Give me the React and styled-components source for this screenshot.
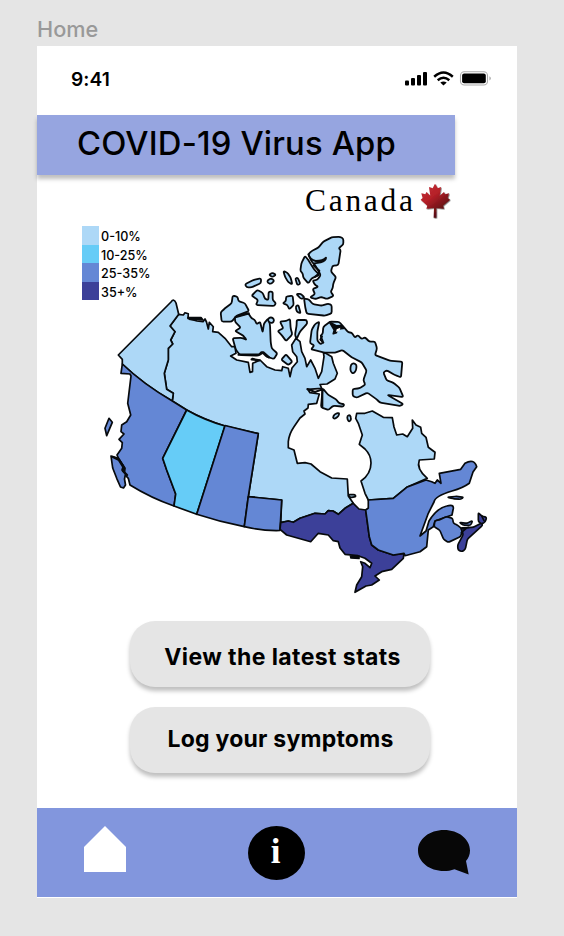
import React from "react";
import styled, { createGlobalStyle } from "styled-components";

const GlobalStyle = createGlobalStyle`
  * { box-sizing: border-box; }
  body { margin: 0; background: #e5e5e5; font-family: Inter, sans-serif; color: #000; }
  svg { display: block; }
`;

const Canvas = styled.div`
  width: 564px;
  height: 936px;
  padding: 16px 47px 0 37px;
  overflow: hidden;
`;
const FrameLabel = styled.div`
  height: 30px;
  line-height: 27px;
  font-size: 21.7px;
  font-weight: 500;
  color: #999;
`;
const Phone = styled.main`
  width: 480px;
  height: 852px;
  display: flex;
  flex-direction: column;
  background: #fff;
`;
const StatusBar = styled.div`
  height: 69px;
  padding: 0 25px 4px 34px;
  display: flex;
  align-items: center;
  justify-content: space-between;
`;
const Time = styled.span`
  font-size: 19.2px;
  font-weight: 600;
  letter-spacing: 0.1px;
`;
const TitleBar = styled.header`
  width: 418px;
  height: 60px;
  padding: 0 0 4px 40px;
  display: flex;
  align-items: center;
  background: #96a5e0;
  box-shadow: 0 4px 4px rgba(0, 0, 0, 0.25);
`;
const Title = styled.h1`
  margin: 0;
  font-size: 32.8px;
  font-weight: 500;
  letter-spacing: 0.15px;
  white-space: nowrap;
`;
const Brand = styled.div`
  height: 50px;
  padding: 8px 65px 0 268px;
  display: flex;
  align-items: flex-start;
  justify-content: space-between;
`;
const BrandName = styled.span`
  font-family: "Liberation Serif", serif;
  font-size: 31.5px;
  line-height: 36px;
  letter-spacing: 2.7px;
  white-space: nowrap;
`;
const MapSection = styled.section`
  display: grid;
  height: 396px;
`;
const Legend = styled.ul`
  grid-area: 1 / 1;
  z-index: 1;
  align-self: start;
  justify-self: start;
  margin: 1px 0 0 45px;
  padding: 0;
  list-style: none;
`;
const LegendRow = styled.li`
  height: 18.5px;
  display: flex;
  align-items: center;
  gap: 2px;
  font-size: 12.6px;
  font-weight: 500;
  line-height: 18px;
  white-space: nowrap;
`;
const Swatch = styled.span`
  width: 17px;
  height: 18.5px;
  background: ${(p) => p.$color};
`;
const LegendText = styled.span`
  padding-top: 4px;
`;
const MapDrawing = styled.svg`
  grid-area: 1 / 1;
  margin-left: 63px;
`;
const Actions = styled.div`
  display: flex;
  flex-direction: column;
  align-items: center;
  gap: 20px;
  padding-left: 6px;
`;
const ActionButton = styled.button`
  width: 300px;
  height: 66px;
  padding: ${(p) => p.$drop}px 0 ${(p) => p.$lift}px ${(p) => p.$shift}px;
  border: 0;
  border-radius: 25px;
  background: #e5e5e5;
  box-shadow: 0 4px 4px rgba(0, 0, 0, 0.25);
  color: #000;
  font: 700 23px Inter, sans-serif;
  letter-spacing: ${(p) => p.$tracking}px;
  white-space: nowrap;
`;
const TabBar = styled.nav`
  height: 89px;
  margin-top: auto;
  margin-bottom: 1px;
  padding: 0 47px;
  display: flex;
  align-items: center;
  justify-content: space-between;
  background: #8296dd;
`;
const HomeIcon = styled.svg`
  margin-bottom: 8px;
`;
const InfoBadge = styled.span`
  width: 57px;
  height: 54px;
  margin: 0 0 0 9px;
  padding: 0 2px 1px 0;
  border-radius: 50%;
  display: flex;
  align-items: center;
  justify-content: center;
  background: #000;
  color: #fff;
  font: 700 35px "Liberation Serif", serif;
`;

const LIGHT = "#add8f7";
const CYAN = "#66ccf7";
const BLUE = "#6487d5";
const NAVY = "#3c4099";

const legend = [
  ["0-10%", LIGHT],
  ["10-25%", CYAN],
  ["25-35%", BLUE],
  ["35+%", NAVY],
];

const regions = [
  // Nunavut, Northwest Territories and northern Manitoba
  [LIGHT, "M178.7 314.3L183.3 315 185 312.7 188.3 313.7 188 318.5 197 321 203 321.7 205 319 206.5 322 208.3 329 209.3 322.3 213.3 326.7 212.7 331.7 218.3 332.3 225 338.3 231.7 346.7 235 346.7 236 353.3 230.7 356 236.7 360 248.3 362.3 250 372.3 252.5 371.7 252.7 363.3 260 360 266.7 366.7 275 370 281.7 370.7 282.7 366.7 288.3 368.3 290 376.7 292 368 297.3 361.7 296.7 356.7 292.7 351.7 291.7 345 296 338.3 300 341.7 301.7 351.7 305 358.3 306.7 366.7 310.7 360 315 368.3 318.3 378.3 321.7 371.7 324 356.7 323.3 351.7 331.7 356.7 333.3 363.3 337.3 373.3 335 379 327 384 320 384.5 321.7 388.3 307.7 389.3 310 392.7 319.3 394 316.7 403.3 308.3 404.3 308 408 304 411 305 414 300 418 294 426.7Q289 434 288.3 441.7L288.3 447.7 294 450 297.3 463.3 305 462.7 311 464 320 471.7 331.7 478 347.3 479 348.3 496 353.3 503.3 345 508.3 338.3 514.3 333 511 328.3 510.7 325 514 315 513.3 300 518.3 293.3 522.3 288.3 521 280.7 522.7 281.7 500 248.3 496.7 258.3 433.7 225 426Q205 420 186.7 410L172.3 401 173.3 393.3 166.7 389.3 164.3 373.3 168.3 360 168.3 348.3 172.7 344 170.7 340 175 331.7 170 326Z"],
  // Yukon
  [LIGHT, "M118.3 355L171 302Q174 298 176 303L178.7 314.3 170 326 175 331.7 170.7 340 172.7 344 168.3 348.3 168.3 360 164.3 373.3 166.7 389.3 173.3 393.3 172.3 401Q143 384 122.3 364L122.3 359.3Z"],
  // British Columbia
  [BLUE, "M122.3 364Q143 384 172.3 401L186.7 410 162.7 458.3 166.7 470 175.7 494 174 506Q151 498 130 485L128.3 478.3 124.3 474 125 468.3 119 459.3 117 455 121.7 448.3 122.3 442.7 119 439.3 124 434 121 431.7 121.7 425 126.7 421.7 130.7 415 127.7 403.3 131 376 130 374 121 373.3Z"],
  [BLUE, "M111 456L118.3 458.3 123.3 466 122 470 125.5 474 124.5 479 125.5 485 123.5 488 120.5 487 116.7 478.3 112.7 468Z"],
  [BLUE, "M109 418.3L112.3 422.3 106.7 435.7 105 428.3Z"],
  // Alberta
  [CYAN, "M186.7 410Q204 420 225 426L196.7 514.3 174 506 175.7 494 166.7 470 162.7 458.3Z"],
  // Saskatchewan
  [BLUE, "M225 425.5L258.3 433.7 248.3 496.7 244.3 526.7Q220 522 196.7 514.3Z"],
  // Southern Manitoba
  [BLUE, "M248.3 496.7L281.7 500 280 530.5Q262 531 244.3 526.7Z"],
  // Ontario
  [NAVY, "M280.7 522.7L288.3 521 293.3 522.3 300 518.3 315 513.3 325 514 328.3 510.7 333 511 338.3 514.3 345 508.3 353.3 503.3 359 509 365.7 510 369.3 536.7 371.7 545 378.3 550 393.3 555 404 553.3 403.3 558.3 391.7 569.3 381.7 571.7 375 576 379.3 580 371.7 585 366 586 355 592.3 356.7 585 361.7 576.7 362.7 566.7 360.7 561.7 365 563.3 370 567.7 371.7 563.3 365 558.3 358 555.7 345 554.3 340 548 338.3 541.7 333.3 540.7 328.3 535 318.3 533.3 310.7 541.7 298.3 538.3 286.7 535 280 529.3Z"],
  // Northern Quebec and Labrador
  [LIGHT, "M356.7 413.3L365 413.3 372.3 411 383.3 417.3 392.3 417.7 394 427 396.7 435 402.7 434 407.3 436.7 412.7 428.3 412.3 420 416 425 420.7 427.3 421.7 433.3 426 437.3 428.3 447.3 435 452.3 434.3 459 419.3 460Q416 469 427.3 478.3L406.7 487.3 393.3 498.3 368.3 500 365 493.3 361 481Q371 474 371 463 371 455 365 449L359.3 444.3 362.3 435 358.3 423.3 355.7 418.3Z"],
  // Quebec
  [BLUE, "M368.3 500L393.3 498.3 406.7 487.3 426 480 431.7 481.7 435 483.3 437.3 480 441 483.3 439.3 473.3 460.7 469.3 465 463.3Q474 458 476.7 466.7L473 472 469.3 483.3Q463 488 452 491 435 496 434 502L428.3 513.3 420 536 426 531 429 521Q437 508 446.7 506 454 504 453.3 508.5L452 515 446 517 435 521 433.3 526.7 428.3 530 426.7 546.7 420 551.7 405 555.7 404 553.3 393.3 555 378.3 550 371.7 545 369.3 536.7 365.7 510 368.3 508Z"],
];

// Atlantic provinces, drawn at three units per pixel
const atlantic = [
  [BLUE, "M285 362L298 360 320 350 338 355 340 370 350 374 368 388 362 410 325 427 311 418 299 390 282 380Z"],
  [BLUE, "M358 367L380 370 398 362 392 376 368 375Z"],
  [NAVY, "M362 384L400 382 425 369 428 376 382 418 376 448 366 455 354 450 353 435 370 403Z"],
  [NAVY, "M415 338L425 348 440 352 436 365 426 372 415 365Z"],
  [BLUE, "M322 292L350 289 371 292 362 298 338 296Z"],
  [LIGHT, "M24 284L45 284 48 290 30 293Z"],
];

const westIslands = [
  "M325 88L335 78 355 68 370 50 395 37 420 35 430 41 430 58 416 70 422 75 415 120 397 123 393 140 408 156 400 175 398 190 392 200 401 213 380 222 365 216 345 222 330 217 345 207 338 192 355 185 345 180 338 167 352 165 362 150 345 120 335 110Z",
  "M315 93L325 105 340 130 358 150 335 160 325 175 310 158 308 145 301 138 304 115Z",
  "M312 220L327 224 338 237 365 242 385 236 395 240 395 265 375 272 320 266 316 248Z",
  "M289 207L302 206 314 218 303 222Z",
  "M287 244L295 240 302 265 290 260Z",
  "M98 212L113 215 115 228 135 235 147 258 110 272 95 290 65 290 62 262 75 250 95 235Z",
  "M105 275L145 265 155 280 165 285 170 298 180 290 188 322 192 295 205 280 210 300 212 350 215 370 232 385 222 402 200 395 185 380 175 392 120 390 108 375 98 340 125 338 140 345 130 332 105 318 122 308 105 290Z",
  "M240 290L258 288 270 282 272 310 277 328 258 348 245 330 233 318 250 310Z",
  "M290 285L320 285 322 295 300 320 290 342 285 330 290 300Z",
  "M258 388L277 410 265 420 244 404Z",
  "M155 212L172 195 188 203 195 222 205 225 206 200 218 200 218 225 228 235 222 243 168 240 174 225Z",
  "M135 178L160 165 183 160 183 174 155 187 140 187Z",
  "M202 166L214 160 223 167 213 177 203 174Z",
  "M207 150L216 143 228 149 218 156Z",
  "M250 138L262 143 272 158 277 178 265 172 255 155Z",
  "M286 160L293 158 301 177 292 180Z",
  "M258 215L278 212 281 240 268 253 262 240 248 235 258 228Z",
  "M203 285L208 277 218 278 223 286 218 294 208 293Z",
];

const eastIslands = [
  "M118 65L105 72 95 90 90 130 103 136 93 148 135 158 165 158 187 150 215 172 245 187 260 212 250 240 256 254 238 265 218 267 218 288 230 293 262 278 290 298 300 308 360 318 370 312 322 285 370 291 358 263 340 248 320 241 310 217 320 211 345 225 363 232 367 185 330 182 285 165 291 145 285 125 268 125 255 112 245 117 233 105 225 113 215 98 205 97 190 80 178 66 150 65 130 80 128 102 121 106 130 127 122 133 112 122 112 95Z",
  "M128 265L145 285 168 298 178 310 193 313 190 320 160 317 145 330 123 322Z",
  "M211 205L213 194 221 189 230 195 228 212 220 221 212 215Z",
  "M158 353L164 342 178 338 176 348 164 357Z",
  "M202 347L210 345 214 357 208 366 202 358Z",
];

// Turns a closed polyline into a coastline with rounded corners.
function coast(d, radius = 5) {
  const n = d.match(/[\d.]+/g).map(Number);
  const pts = [];
  for (let i = 0; i < n.length; i += 2) pts.push([n[i], n[i + 1]]);
  const toward = (a, b) => {
    const len = Math.hypot(b[0] - a[0], b[1] - a[1]);
    const t = Math.min(0.5, radius / len);
    return `${(a[0] + (b[0] - a[0]) * t).toFixed(1)} ${(a[1] + (b[1] - a[1]) * t).toFixed(1)}`;
  };
  const parts = pts.map((p, i) => {
    const before = pts[(i + pts.length - 1) % pts.length];
    const after = pts[(i + 1) % pts.length];
    return `${toward(p, before)}Q${p[0]} ${p[1]} ${toward(p, after)}`;
  });
  return `M${parts.join("L")}Z`;
}

function CanadaMap() {
  return (
    <MapDrawing width="397" height="375" viewBox="100 225 397 375" stroke="#070a0d" strokeLinejoin="round" strokeLinecap="round">
      <g strokeWidth="1.7">
        {regions.map(([fill, d]) => <path key={d} fill={fill} d={d} />)}
        <path d="M188 317.5L201 317.5 203 320 190 319.5Z" fill="#070a0d" />
        <path d="M350.5 556H359V558.5L351 558Z" fill="#070a0d" />
        <path d="M113 457L119 460 124 468 123 471 127 475" fill="none" strokeWidth="2.4" />
      </g>
      <g transform="translate(340 400) scale(.33333)" strokeWidth="5">
        {atlantic.map(([fill, d]) => <path key={d} fill={fill} d={coast(d)} />)}
        <path d="M365 387L386 382M364 398L378 386M425 348L432 362" fill="none" />
      </g>
      <g transform="translate(200 225) scale(.33333)" strokeWidth="5.4" fill={LIGHT}>
        {westIslands.map((d) => <path key={d} d={coast(d)} />)}
        <path d="M325 88Q330 105 347 108Q370 108 378 98Q379 107 362 112L343 115" fill="none" />
        <path d="M340 121L358 137 354 148 345 155" fill="none" strokeWidth="6" />
        <path d="M108 276L146 265M157 402L178 406 155 403M116 389L178 389 190 382 207 397" fill="none" strokeWidth="7" />
      </g>
      <g transform="translate(280 300) scale(.33333)" strokeWidth="5.4" fill={LIGHT}>
        {eastIslands.map((d) => <path key={d} d={coast(d)} />)}
        <path d="M149 67L170 78 186 77 190 85 170 87 169 98 160 101 163 90Z" fill="#070a0d" />
        <path d="M170 88L181 83 179 91 168 96Z" fill="#fff" stroke="none" />
        <path d="M82 267L105 276 127 268 127 320M126 109L121 119 130 128" fill="none" strokeWidth="6" />
      </g>
    </MapDrawing>
  );
}

function MapleLeaf() {
  return (
    <svg width="32" height="37" viewBox="0 0 96 111">
      <defs>
        <linearGradient id="leaf" x1="0" y1="0" x2=".65" y2="1">
          <stop offset="0" stopColor="#c5303a" />
          <stop offset=".45" stopColor="#b52028" />
          <stop offset="1" stopColor="#440a0e" />
        </linearGradient>
        <filter id="soft" x="-15%" y="-15%" width="140%" height="140%">
          <feDropShadow dx="2" dy="2" stdDeviation="1.5" floodOpacity=".65" />
        </filter>
      </defs>
      <path fill="url(#leaf)" filter="url(#soft)" d="M45 2L53 16 63 12 59 38 72 27 75 34 87 31 83 45 90 50 69 68 72 77 49 75 49 104 41 104 42 75 19 77 22 68 2 50 8 45 4 31 16 34 19 27 31 38 27 12 38 16Z" />
    </svg>
  );
}

function StatusIcons() {
  return (
    <svg width="87" height="16" viewBox="0 0 87 16">
      <rect x="0" y="9.5" width="4" height="5" rx="1" />
      <rect x="6" y="7" width="4" height="7.5" rx="1" />
      <rect x="12" y="4" width="4" height="10.5" rx="1" />
      <rect x="18" y="1" width="4" height="13.5" rx="1" />
      <g fill="none" stroke="#000" strokeWidth="2.5">
        <path d="M29.2 5.7Q38.5 -2.7 47.8 5.7" />
        <path d="M32.7 9.2Q38.5 4.2 44.3 9.2" />
      </g>
      <path d="M35.3 11.6Q38.5 9.2 41.7 11.6L38.5 14.5Z" />
      <rect x="55.5" y="0.8" width="27" height="13.2" rx="3.8" fill="none" stroke="#aaa" strokeWidth="1.1" />
      <rect x="57.1" y="2.5" width="23.7" height="9.8" rx="2" />
      <path d="M84.5 5.3Q87 7.3 84.5 9.6Z" fill="#999" />
    </svg>
  );
}

export default function App() {
  return (
    <Canvas>
      <GlobalStyle />
      <FrameLabel>Home</FrameLabel>
      <Phone>
        <StatusBar>
          <Time>9:41</Time>
          <StatusIcons />
        </StatusBar>
        <TitleBar><Title>COVID-19 Virus App</Title></TitleBar>
        <Brand>
          <BrandName>Canada</BrandName>
          <MapleLeaf />
        </Brand>
        <MapSection>
          <Legend>
            {legend.map(([label, color]) => (
              <LegendRow key={label}>
                <Swatch $color={color} />
                <LegendText>{label}</LegendText>
              </LegendRow>
            ))}
          </Legend>
          <CanadaMap />
        </MapSection>
        <Actions>
          <ActionButton $drop={5} $lift={0} $shift={5} $tracking={0.42}>View the latest stats</ActionButton>
          <ActionButton $drop={0} $lift={3} $shift={1} $tracking={0.23}>Log your symptoms</ActionButton>
        </Actions>
        <TabBar>
          <HomeIcon width="42" height="46" viewBox="0 0 42 46"><path fill="#fff" d="M21 0L42 21V46H0V21Z" /></HomeIcon>
          <InfoBadge>i</InfoBadge>
          <svg width="52" height="45" viewBox="0 0 52 45">
            <path fill="#070707" d="M26 0C40.5 0 52 9 52 20.5C52 24.5 50.5 28 48 31L50.7 44.5 36.5 39.2C33 40.6 29.5 41 26 41C11.5 41 0 32 0 20.5S11.5 0 26 0Z" />
          </svg>
        </TabBar>
      </Phone>
    </Canvas>
  );
}
